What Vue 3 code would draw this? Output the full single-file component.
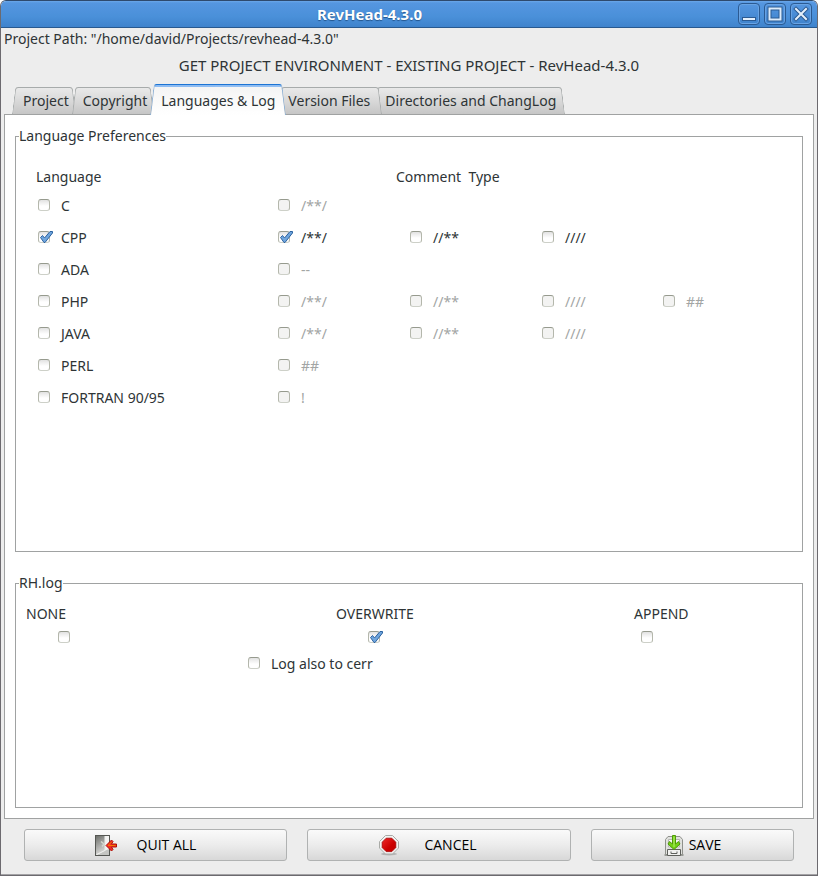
<script setup>
import { reactive, ref } from 'vue'

const tabs = ['Project', 'Copyright', 'Languages & Log', 'Version Files', 'Directories and ChangLog']
const active = ref(2)

const languages = reactive([
  { name: 'C', on: false, types: [{ text: '/**/', on: false }] },
  {
    name: 'CPP',
    on: true,
    types: [{ text: '/**/', on: true }, { text: '//**', on: false }, { text: '////', on: false }],
  },
  { name: 'ADA', on: false, types: [{ text: '--', on: false }] },
  {
    name: 'PHP',
    on: false,
    types: [
      { text: '/**/', on: false },
      { text: '//**', on: false },
      { text: '////', on: false },
      { text: '##', on: false },
    ],
  },
  {
    name: 'JAVA',
    on: false,
    types: [{ text: '/**/', on: false }, { text: '//**', on: false }, { text: '////', on: false }],
  },
  { name: 'PERL', on: false, types: [{ text: '##', on: false }] },
  { name: 'FORTRAN 90/95', on: false, types: [{ text: '!', on: false }] },
])

const logMode = ref('OVERWRITE')
const logModes = ['NONE', 'OVERWRITE', 'APPEND']
const cerr = ref(false)
</script>

<template>
  <div class="window">
    <header class="titlebar">
      <h1 class="title">RevHead-4.3.0</h1>
      <div class="controls">
        <button type="button" class="control" aria-label="Minimize">
          <svg viewBox="0 0 22 22" width="22" height="22">
            <rect x="4.500" y="14.500" width="13" height="3" fill="#e4effb" stroke="#2b5a92" />
          </svg>
        </button>
        <button type="button" class="control" aria-label="Maximize">
          <svg viewBox="0 0 22 22" width="22" height="22">
            <rect x="5.500" y="5.500" width="11" height="11" fill="none" stroke="#2b5a92" stroke-width="4" />
            <rect x="5.500" y="5.500" width="11" height="11" fill="none" stroke="#dcebfa" stroke-width="2" />
          </svg>
        </button>
        <button type="button" class="control" aria-label="Close">
          <svg viewBox="0 0 22 22" width="22" height="22" stroke-linecap="square">
            <path d="M6 6L16 16M16 6L6 16" stroke="#2b5a92" stroke-width="4" />
            <path d="M6 6L16 16M16 6L6 16" stroke="#e4effb" stroke-width="2" />
          </svg>
        </button>
      </div>
    </header>

    <main class="body">
      <p class="path">Project Path: "/home/david/Projects/revhead-4.3.0"</p>
      <h2 class="heading">GET PROJECT ENVIRONMENT - EXISTING PROJECT - RevHead-4.3.0</h2>

      <nav class="tabs" role="tablist">
        <button
          v-for="(tab, i) in tabs"
          :key="tab"
          type="button"
          role="tab"
          class="tab"
          :class="{ active: i === active, before: i < active, after: i > active, next: i === active + 1 }"
          :aria-selected="i === active"
          @click="active = i"
        ><span>{{ tab }}</span></button>
      </nav>

      <section class="page">
        <fieldset class="group languages">
          <legend>Language Preferences</legend>
          <div class="columns">
            <span>Language</span>
            <span>Comment&nbsp; Type</span>
          </div>
          <div v-for="lang in languages" :key="lang.name" class="row">
            <label class="option">
              <input v-model="lang.on" type="checkbox" class="box" />
              <span>{{ lang.name }}</span>
            </label>
            <label v-for="type in lang.types" :key="type.text" class="option" :class="{ off: !lang.on }">
              <input v-model="type.on" type="checkbox" class="box" :disabled="!lang.on" />
              <span>{{ type.text }}</span>
            </label>
          </div>
        </fieldset>

        <fieldset class="group log">
          <legend>RH.log</legend>
          <div class="modes">
            <label v-for="mode in logModes" :key="mode" class="mode" :class="mode.toLowerCase()">
              <span>{{ mode }}</span>
              <input
                type="checkbox"
                class="box"
                :checked="logMode === mode"
                @change="logMode = mode"
              />
            </label>
          </div>
          <label class="option cerr">
            <input v-model="cerr" type="checkbox" class="box" />
            <span>Log also to cerr</span>
          </label>
        </fieldset>
      </section>

      <footer class="actions">
        <button type="button" class="action quit">
          <svg viewBox="0 0 22 22" width="22" height="22">
            <defs>
              <linearGradient id="door" x1="0" y1="0" x2="0.300" y2="1">
                <stop offset="0" stop-color="#6e706c" />
                <stop offset="1" stop-color="#d8d8d6" />
              </linearGradient>
            </defs>
            <rect x="0.500" y="0.500" width="14" height="20" fill="#f4f4f3" stroke="#555753" />
            <path d="M9 16L14 14V20H2z" fill="#c4c5c2" />
            <path d="M1 1H10V15L1 20z" fill="url(#door)" />
            <path d="M1.500 19.500L10 15.500V1" fill="none" stroke="#eeeeec" />
            <path d="M6 6.500L9 9L7 11.500" fill="none" stroke="#d3d7cf" stroke-width="1.500" />
            <path d="M11 10.500L16.500 5L18 6.500L16.500 9H21.500V12H16.500L18 14.500L16.500 16z" fill="#ef2929" stroke="#b01205" stroke-linejoin="round" />
            <path d="M13 10.500H20.500M13.500 10L16.500 7" fill="none" stroke="#f57900" />
          </svg>
          <span>QUIT ALL</span>
        </button>
        <button type="button" class="action cancel">
          <svg viewBox="0 0 20 22" width="20" height="22">
            <defs>
              <linearGradient id="stop" x1="0" y1="0" x2="1" y2="1">
                <stop offset="0" stop-color="#ef2929" />
                <stop offset="0.600" stop-color="#cc0000" />
                <stop offset="1" stop-color="#c00000" />
              </linearGradient>
            </defs>
            <ellipse cx="10" cy="19" rx="8" ry="1.500" fill="#b5b5b5" />
            <path d="M6.500 0.500H13.500L19.500 6.500V13L13.500 19H6.500L0.500 13V6.500z" fill="#f3f3f2" stroke="#a9aba7" />
            <path d="M7.200 3.200H12.800L16.800 7.200V12.600L12.800 16.600H7.200L3.200 12.600V7.200z" fill="url(#stop)" stroke="#a40000" stroke-width="0.800" />
          </svg>
          <span>CANCEL</span>
        </button>
        <button type="button" class="action save">
          <svg viewBox="0 0 20 22" width="20" height="22">
            <path d="M0.500 20H19.500" stroke="#9a9c97" stroke-width="2" />
            <path d="M4 1.500H16L18.500 4.500V19.500H1.500V4.500z" fill="#e0e1de" stroke="#8f918c" stroke-linejoin="round" />
            <path d="M4.500 4.500H15.500V12H4.500z" fill="#f7f7f6" stroke="#b4b6b1" />
            <path d="M3.500 14.500H16.500V20.500H3.500z" fill="#f1f1f0" stroke="#5f615d" />
            <path d="M7 16.500V18.500H13V16.500" fill="none" stroke="#5f615d" />
            <path d="M8.500 0.500H11.500V9L14.500 6.500L16 9L10 14.500L4 9L5.500 6.500L8.500 9z" fill="#73d216" stroke="#4e9a06" stroke-linejoin="round" />
            <path d="M10 1.500V12" stroke="#b4ee6e" />
          </svg>
          <span>SAVE</span>
        </button>
      </footer>
    </main>
  </div>
</template>

<style>
body {
  background: #fff;
}
</style>

<style scoped>
.window {
  box-sizing: border-box;
  min-height: 100vh;
  display: flex;
  flex-direction: column;
  border: 1px solid #6c6a6f;
  border-top-color: #2e4a6e;
  border-radius: 6px 6px 0 0;
  overflow: hidden;
  background: #ededed;
  color: #2e3436;
  font: 14px/20px "Noto Sans", "Open Sans", sans-serif;
}
.titlebar {
  display: flex;
  align-items: center;
  height: 26px;
  padding-right: 5px;
  background: linear-gradient(#6aa7ea, #5596e0 2px, #4a90d9 60%, #3f83cc);
  border-bottom: 1px solid #28598f;
}
.title {
  flex: 1;
  margin: 0;
  text-align: center;
  font-size: 15px;
  line-height: 20px;
  font-weight: 700;
  color: #fff;
  text-shadow: 0 1px 1px #23548c;
}
.controls {
  display: flex;
  gap: 4px;
}
.control {
  box-sizing: border-box;
  width: 22px;
  height: 22px;
  padding: 0;
  display: flex;
  align-items: center;
  justify-content: center;
  border: 1px solid #2b5a92;
  border-radius: 4px;
  background: linear-gradient(#5596e0, #3f83cc);
  box-shadow: inset 0 0 0 1px #69a3e3;
}
.control svg {
  flex: none;
}
.body {
  flex: 1;
  display: flex;
  flex-direction: column;
  border: solid #a3a2a5;
  border-width: 0 0 1px;
  padding: 1px 3px 13px;
}
.path {
  margin: 0;
}
.heading {
  margin: 6px 0 9px;
  text-align: center;
  font-size: 15px;
  line-height: 20px;
  font-weight: 400;
}

.tabs {
  display: flex;
  align-items: flex-end;
  height: 30px;
  padding-left: 8px;
  position: relative;
  z-index: 1;
}
.tab {
  position: relative;
  height: 27px;
  padding: 0 11px;
  border: 0;
  background: none;
  color: inherit;
  font: inherit;
  white-space: nowrap;
}
.tab span {
  position: relative;
  z-index: 1;
}
.tab::before,
.tab::after {
  content: "";
  position: absolute;
  top: 0;
  bottom: 0;
  box-sizing: border-box;
  border: 0 solid #a7abab;
  border-top-width: 1px;
  background: linear-gradient(#e9e9e9, #dcdcdc 40%, #c6c6c6);
}
.tab::before {
  left: 0;
  right: 40%;
  border-left-width: 1px;
  border-top-left-radius: 3px;
  transform: skewX(-7deg);
  transform-origin: bottom;
}
.tab::after {
  left: 50%;
  right: 0;
  border-right-width: 1px;
  border-top-right-radius: 3px;
  transform: skewX(7deg);
  transform-origin: bottom;
}
.tab.before {
  padding-right: 7px;
  z-index: 1;
}
.tab.before + .tab.before,
.tab.next {
  z-index: 2;
}
.tab.before + .tab {
  margin-left: -4px;
}
.tab.after {
  margin-left: -7px;
  padding-right: 9px;
}
.tab.after.next {
  margin-left: -8px;
  padding: 0 11px 0 10px;
}
.tab.active {
  height: 31px;
  padding: 2px 11px 0;
  z-index: 3;
  margin-bottom: -1px;
}
.tab.active::before,
.tab.active::after {
  border-color: #1c74d4;
  background: linear-gradient(#8ebcf2, #8ebcf2 2px, #f4f4f4 2px, #fff);
}
.tab.active::before {
  border-left-color: #8fb2d6;
}
.tab.active::after {
  border-right-color: #8fb2d6;
}

.page {
  flex: 1;
  display: flex;
  flex-direction: column;
  gap: 21px;
  padding: 11px 10px 10px;
  border: 1px solid #a0a2a2;
  background: #fff;
}
.group {
  min-width: 0;
  margin: 0;
  padding: 0;
  border: 1px solid #a0a2a2;
}
.group legend {
  margin-left: 3px;
  padding: 0;
}
.languages {
  flex: 426 1 0;
}
.log {
  flex: 234 1 0;
}
.columns,
.row {
  display: grid;
  align-items: center;
}
.columns {
  grid-template-columns: 360fr 406fr;
  height: 24px;
  padding: 19px 0 0 20px;
}
.row {
  grid-template-columns: 240fr 132fr 132fr 121fr 139fr;
  height: 32px;
  padding-left: 22px;
}
.option {
  display: flex;
  align-items: center;
  gap: 11px;
}
.option span {
  padding-top: 2px;
}
.option.off {
  color: #a2a5a4;
}
.box {
  appearance: none;
  box-sizing: border-box;
  flex: none;
  position: relative;
  width: 12px;
  height: 12px;
  margin: 0;
  border: 1px solid #b4b7ac;
  border-top-color: #969a8e;
  border-bottom-color: #cdd0c8;
  border-radius: 3px;
  background: linear-gradient(#e2e2e2, #fff 60%);
}
.box:disabled {
  background: #f3f3f2;
}
.box:checked::after {
  content: "";
  position: absolute;
  left: 0;
  top: -1px;
  width: 14px;
  height: 12px;
  background: url("data:image/svg+xml,%3Csvg xmlns='http://www.w3.org/2000/svg' viewBox='0 0 14 12'%3E%3Cpath d='M1.500 6.500L3.500 4.500L5.500 7L11 .5H13.500V2L6 11.500H5z' fill='%236fa5dd' stroke='%232c62a0' stroke-linejoin='round'/%3E%3C/svg%3E");
}

.modes {
  display: grid;
  grid-template-columns: 310fr 298fr 168fr;
  padding: 11px 0 0 10px;
}
.mode {
  display: flex;
  flex-direction: column;
  gap: 7px;
}
.mode .box {
  margin-left: 32px;
}
.mode.append .box {
  margin-left: 7px;
}
.cerr {
  width: max-content;
  margin: 9px 0 0 232px;
}

.actions {
  display: grid;
  grid-template-columns: 263fr 264fr 203fr;
  gap: 20px;
  margin: 10px 20px 0;
}
.action {
  display: flex;
  align-items: center;
  justify-content: center;
  gap: 20px;
  height: 32px;
  padding: 0;
  border: 1px solid #b0b2b2;
  border-radius: 3px;
  background: linear-gradient(#fafafa, #ececec 50%, #d8d8d8);
  color: #000;
  font: 14px/20px "Open Sans", "Noto Sans", sans-serif;
}
.action svg {
  margin-top: 2px;
}
.action.quit {
  padding-right: 20px;
}
.action.cancel {
  gap: 25px;
  padding-right: 22px;
}
.action.save {
  gap: 5px;
}
</style>
